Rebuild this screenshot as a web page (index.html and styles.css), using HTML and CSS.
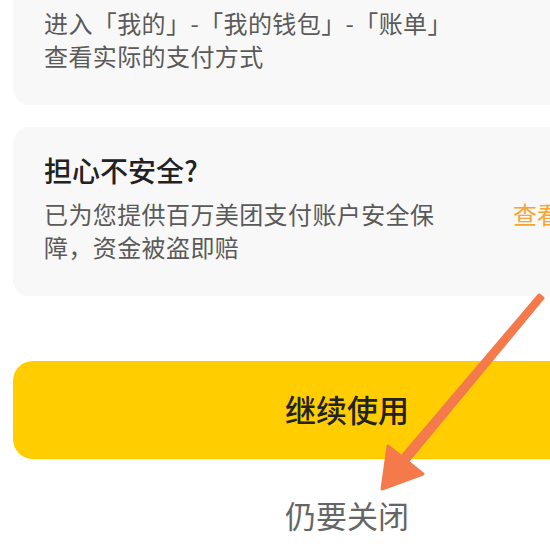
FILE: index.html
```html
<!DOCTYPE html>
<html lang="zh-CN">
<head>
<meta charset="utf-8">
<title>关闭确认</title>
<link rel="stylesheet" href="styles.css">
</head>
<body>
<div class="page">
  <div class="card card-top">
    <p class="desc">进入「我的」-「我的钱包」-「账单」<br>查看实际的支付方式</p>
  </div>
  <div class="card card-safe">
    <h2 class="title">担心不安全?</h2>
    <div class="row">
      <p class="desc desc-narrow">已为您提供百万美团支付账户安全保障，资金被盗即赔</p>
      <span class="link">查看详情</span>
    </div>
  </div>
  <button class="btn-primary">继续使用</button>
  <div class="btn-close">仍要关闭</div>
</div>
<svg class="arrow" width="550" height="546" viewBox="0 0 550 546">
  <path d="M539 295 L543 298 L404 466 L398 461 Z" fill="#f47a4c" stroke="#f47a4c" stroke-width="3" stroke-linejoin="round"/>
  <polygon points="388,446 423,474 382,489" fill="#f47a4c" stroke="#f47a4c" stroke-width="3" stroke-linejoin="round"/>
</svg>
</body>
</html>
```

FILE: styles.css
```css
html, body {
  margin: 0;
  padding: 0;
  background: #ffffff;
}
body {
  width: 550px;
  height: 546px;
  overflow: hidden;
  position: relative;
  font-family: "Noto Sans CJK SC", "Noto Sans", sans-serif;
}
.page {
  padding-left: 13px;
  width: 700px;
}
.card {
  background: #f8f8f8;
  border-radius: 16px;
  width: 668px;
  box-sizing: border-box;
  padding-left: 31px;
}
.card-top {
  margin-top: -20px;
  padding-top: 26px;
  padding-bottom: 33px;
}
.desc {
  margin: 0;
  font-size: 24px;
  line-height: 33px;
  letter-spacing: 0.4px;
  color: #5a5a5a;
}
.card-safe {
  margin-top: 22px;
  padding-top: 25px;
  padding-bottom: 33px;
}
.title {
  margin: 0 0 8px 0;
  font-size: 28px;
  line-height: 37px;
  font-weight: 500;
  color: #222222;
}
.row {
  display: flex;
  align-items: flex-start;
}
.desc-narrow {
  width: 400px;
  flex: none;
}
.link {
  margin-left: 69px;
  font-size: 24px;
  line-height: 33px;
  color: #f3a634;
  white-space: nowrap;
}
.btn-primary {
  display: flex;
  align-items: center;
  justify-content: center;
  margin-top: 65px;
  width: 668px;
  height: 98px;
  border: none;
  border-radius: 20px;
  background: #ffcd00;
  font-family: "Noto Sans CJK SC", "Noto Sans", sans-serif;
  font-size: 31px;
  font-weight: 500;
  color: #222222;
  padding: 0 0 4px 0;
}
.btn-close {
  margin-top: 36px;
  width: 668px;
  text-align: center;
  font-size: 31px;
  line-height: 40px;
  color: #666666;
}
.arrow {
  position: absolute;
  left: 0;
  top: 0;
}
```
